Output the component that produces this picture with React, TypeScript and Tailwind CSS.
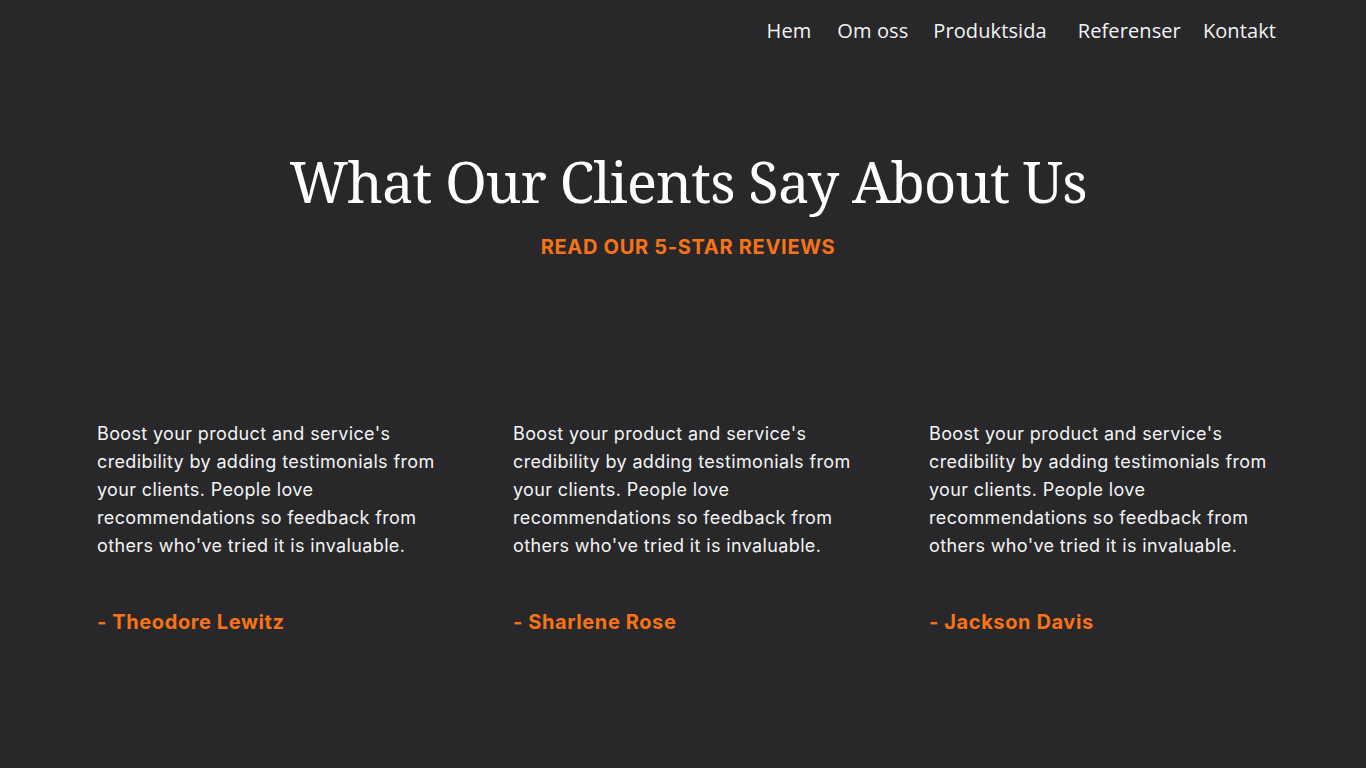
import React from "react";

const navItems = [
    {label: "Hem", cls: "mr-[26px]"},
    {label: "Om oss", cls: "mr-[25px]"},
    {label: "Produktsida", cls: "mr-[31px]"},
    {label: "Referenser", cls: "mr-[22px]"},
    {label: "Kontakt", cls: ""},
];

const reviews = [
    {name: "- Theodore Lewitz"},
    {name: "- Sharlene Rose"},
    {name: "- Jackson Davis"},
];

const quote =
    "Boost your product and service's credibility by adding testimonials from your clients. People love recommendations so feedback from others who've tried it is invaluable.";

export default function App() {
    return (
        <div className="min-h-screen w-full bg-[#28282a] text-white">
            <nav className="flex justify-end pr-[90px] pt-[16px] font-['Open_Sans',sans-serif] text-[20px] leading-[30px] tracking-[0.1px]">
                {navItems.map((item) => (
                    <a key={item.label} className={`${item.cls} text-[#f4f4f4]`}>
                        {item.label}
                    </a>
                ))}
            </nav>

            <header className="mt-[97px] flex flex-col items-center pl-[10px]">
                <h1 className="font-['Noto_Serif','DejaVu_Serif',serif] text-[56px] leading-[76px] tracking-[-0.85px] text-white">
                    What Our Clients Say About Us
                </h1>
                <p className="mt-[14px] font-['Inter',sans-serif] text-[20px] font-bold leading-[28px] tracking-[0.7px] text-[#f97316]">
                    READ OUR 5-STAR REVIEWS
                </p>
            </header>

            <section className="mt-[159px] flex pl-[97px] font-['Inter',sans-serif]">
                {reviews.map((r, i) => (
                    <div key={r.name} className={`w-[345px] ${i < 2 ? "mr-[71px]" : ""}`}>
                        <p className="text-[18px] leading-[28px] tracking-[0.36px] text-[#f4f4f4]">{quote}</p>
                        <p className="mt-[48px] text-[20px] font-bold leading-[28px] tracking-[0.6px] text-[#f97316]">
                            {r.name}
                        </p>
                    </div>
                ))}
            </section>
        </div>
    );
}
